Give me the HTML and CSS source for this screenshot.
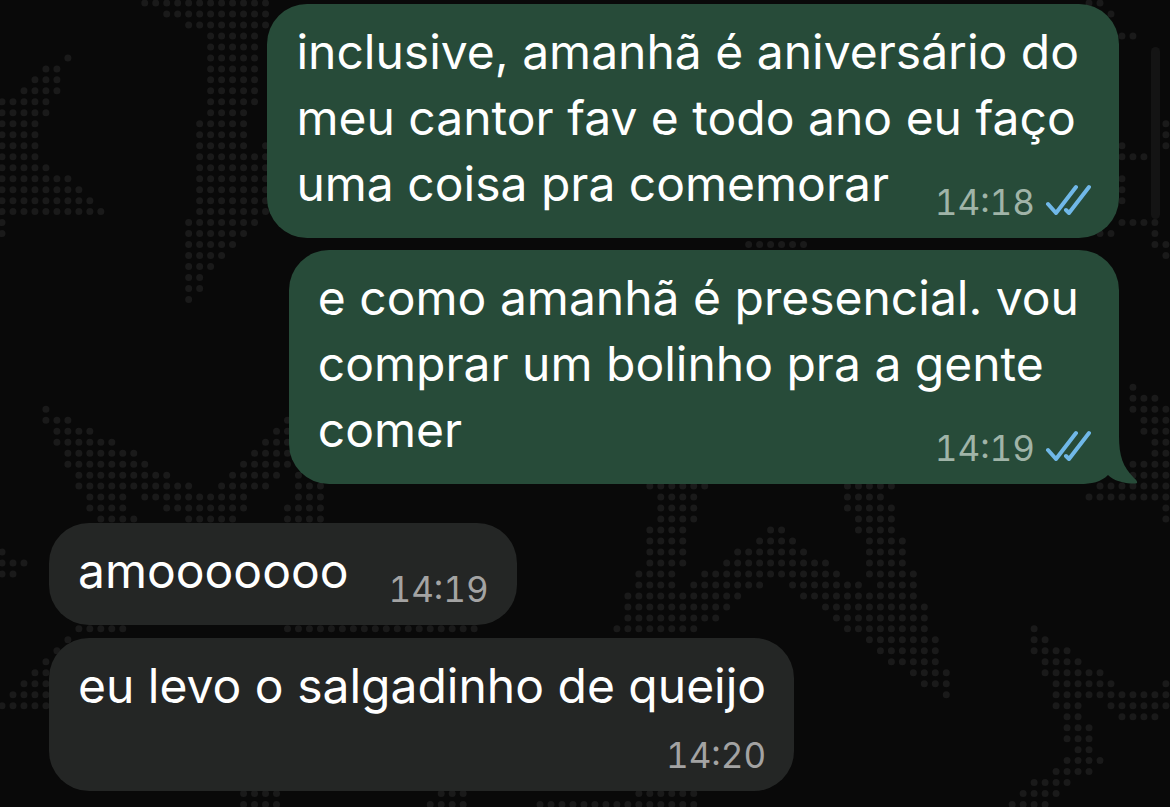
FILE: index.html
```html
<!DOCTYPE html>
<html lang="pt-BR">
<head>
  <meta charset="UTF-8">
  <meta name="viewport" content="width=device-width, initial-scale=1.0">
  <title>Chat</title>
  <link rel="stylesheet" href="styles.css">
</head>
<body>
  <svg class="wallpaper" aria-hidden="true"><path id="dots" class="dots"/></svg>

  <main class="chat">
    <section class="group sent">
      <article class="bubble">
        <p class="text">inclusive, amanhã é aniversário do<br>meu cantor fav e todo ano eu faço<br>uma coisa pra comemorar</p>
        <div class="meta">
          <time>14:18</time>
          <svg class="checks" viewBox="0 0 46 31" role="img" aria-label="Lida"><path d="M3 20l8 9L31 3M21 26l3 3L44 3"/></svg>
        </div>
      </article>
      <article class="bubble">
        <svg class="tail" viewBox="0 0 60 50" aria-hidden="true"><path d="M0 50C13 50 22 48 29 41C35 47 46 50 57 49.500C59 49 58.500 47 55 44C44 33 40 22 40 2L0 2Z"/></svg>
        <p class="text">e como amanhã é presencial. vou<br>comprar um bolinho pra a gente<br>comer</p>
        <div class="meta">
          <time>14:19</time>
          <svg class="checks" viewBox="0 0 46 31" role="img" aria-label="Lida"><path d="M3 20l8 9L31 3M21 26l3 3L44 3"/></svg>
        </div>
      </article>
    </section>

    <section class="group received">
      <article class="bubble inline">
        <p class="text">amooooooo</p>
        <time>14:19</time>
      </article>
      <article class="bubble stacked">
        <p class="text">eu levo o salgadinho de queijo</p>
        <time>14:20</time>
      </article>
    </section>
  </main>

  <div class="scroll-thumb"></div>

  <script>
    // dotted wallpaper: for each grid row, the runs of columns that have a dot
    const rows = {
      0: '13-24 99-100', 1: '15-24 101', 2: '17-24', 3: '19-23 102-103', 4: '19-23',
      5: '6 19-23', 6: '4-5 19-23', 7: '3-5 19-23', 8: '2-5 19-23', 9: '0-4 19-23',
      10: '0-4 19-22', 11: '0-3 18-22 106', 12: '0-3 18-22 106', 13: '0-3 18-22 24 102 105-106',
      14: '0-3 18-24 102-105', 15: '0-4 18-24', 16: '0-6 18-24 102', 17: '0-7 18-24 102',
      18: '0-8 18-24 102', 19: '0-9 18-24', 20: '0 17-23 102-105', 21: '0 17-22 100-101 105',
      22: '17-21 68-73 105-106', 23: '17-20 106', 24: '17-19', 25: '17-18', 26: '17-18', 27: '17',
      35: '103', 36: '103-105', 37: '4 103-106', 38: '4-6 26 104-106', 39: '5-8 25-26 104-106',
      40: '5-10 24-26 105-106', 41: '6-12 23-26 105-106', 42: '6-13 22-26 103-106',
      43: '7-15 21-25 27 103-106', 44: '7-17 20-24 27-29 59-64 77-81 100-106',
      45: '8-11 13-22 27-29 60-63 77-80 99-106', 46: '8-11 15-22 26-29 60-63 77-81 106',
      47: '9-12 17-21 26-29 60-63 78-81 106', 48: '59-62 70-71 78-81', 49: '59-62 69-72 79-82',
      50: '0 59-62 67-73 79-82', 51: '0-2 59-62 66-75 79-82', 52: '0-1 58-61 64-76 79-83',
      53: '58-61 63-69 72-78 80-83', 54: '57-67 73-83', 55: '57-66 75-84', 56: '57-65 76-84',
      57: '7-11 26-43 56-63 77-84 94', 58: '6 79-85 94-95', 59: '5 80-85 94-97',
      60: '4 81-85 95-98', 61: '3-4 83-86 95-100', 62: '2-4 84-86 96-101 106',
      63: '1-4 86 96-106', 64: '0-4 96-98 101-106', 65: '97-98 102-105', 66: '97-99',
      67: '97-99', 68: '98-99', 69: '97-100', 70: '96-99', 71: '94-97',
      72: '22-25 40-42 58-63 93-96', 73: '22-25 39-42 49-63 92-95'
    };
    const pitch = 10.98;
    let d = '';
    for (const row in rows) {
      for (const run of rows[row].split(' ')) {
        const [from, to = from] = run.split('-').map(Number);
        for (let col = from; col <= to; col++) {
          d += `M${2 + col * pitch} ${3 + row * pitch}h.01`;
        }
      }
    }
    document.getElementById('dots').setAttribute('d', d);
  </script>
</body>
</html>
```
FILE: styles.css
```css
* {
  box-sizing: border-box;
}
body {
  position: relative;
  min-height: 100vh;
  margin: 0;
  overflow: hidden;
  background: #090909;
  color: #fff;
  font-family: Inter, "Liberation Sans", sans-serif;
}
.wallpaper {
  position: absolute;
  top: 0;
  left: 0;
  width: 100%;
  height: 100%;
}
.dots {
  fill: none;
  stroke: #1a1a1a;
  stroke-width: 7;
  stroke-linecap: round;
}
.chat {
  position: relative;
  display: flex;
  flex-direction: column;
  gap: 39px;
  padding: 4px 51px 16px 49px;
}
.group {
  display: flex;
  flex-direction: column;
  gap: 12px;
}
.sent {
  align-items: flex-end;
}
.received {
  align-items: flex-start;
  gap: 13px;
}
.bubble {
  position: relative;
  display: grid;
  padding: 15px 28px 18px 29px;
  border-radius: 40px;
}
.sent .bubble {
  background: #274b39;
}
.received .bubble {
  background: #242625;
}
.text {
  grid-area: 1 / 1;
  margin: 0;
  padding-bottom: 3px;
  font-size: 48px;
  line-height: 66px;
}
.sent .text {
  padding-right: 12px;
}
.meta {
  position: relative;
  grid-area: 1 / 1;
  place-self: end;
  display: flex;
  align-items: flex-start;
  gap: 10px;
}
time {
  font-size: 35px;
  line-height: 36px;
  font-variant-numeric: tabular-nums;
  color: #a3a3a3;
}
.sent time {
  color: #a0b4a8;
}
.checks {
  width: 46px;
  height: 31px;
  fill: none;
  stroke: #70b8e8;
  stroke-width: 4;
  stroke-linecap: round;
  stroke-linejoin: round;
}
.tail {
  position: absolute;
  right: -20px;
  bottom: 0;
  width: 60px;
  height: 50px;
  fill: #274b39;
}
.received .inline {
  display: flex;
  align-items: flex-end;
  gap: 40px;
}
.received .stacked {
  display: flex;
  flex-direction: column;
}
.stacked time {
  align-self: flex-end;
  margin-top: 15px;
}
.scroll-thumb {
  position: absolute;
  top: 47px;
  right: 10px;
  width: 9px;
  height: 172px;
  border-radius: 5px;
  background: #141414;
}
```
